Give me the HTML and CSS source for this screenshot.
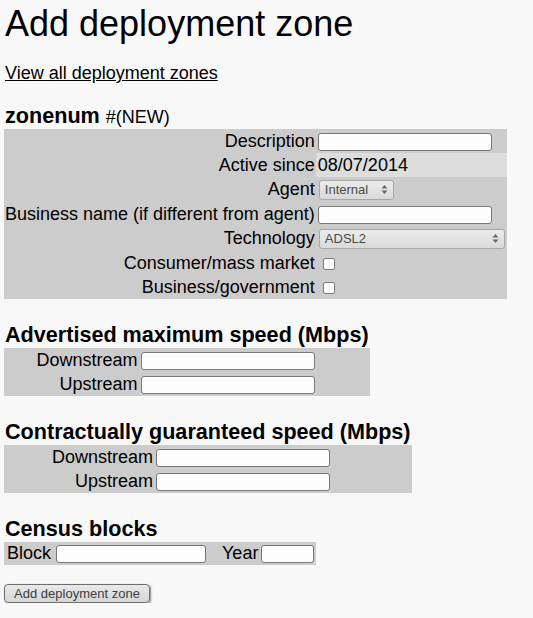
FILE: index.html
```html
<!DOCTYPE html>
<html lang="en">
<head>
<meta charset="utf-8">
<title>Add deployment zone</title>
<link rel="stylesheet" href="styles.css">
</head>
<body>
<h1 class="page-title">Add deployment zone</h1>
<p class="nav"><a class="nav-link" href="#">View all deployment zones</a></p>
<form class="zone-form">
  <table class="ftable ftable-main">
    <tr><th colspan="2" class="sect-head sect-head-main">zonenum <span class="sect-sub">#(NEW)</span></th></tr>
    <tr class="row"><td class="lbl">Description</td><td class="val"><input class="txt" type="text"></td></tr>
    <tr class="row"><td class="lbl">Active since</td><td class="val val-static">08/07/2014</td></tr>
    <tr class="row row-sel"><td class="lbl">Agent</td><td class="val"><div class="select select-agent"><span>Internal</span><svg class="arrows" width="7" height="11" viewBox="0 0 7 11"><polygon points="3.5,1 6.5,4.5 0.5,4.5"/><polygon points="0.5,6.5 6.5,6.5 3.5,10"/></svg></div></td></tr>
    <tr class="row"><td class="lbl">Business name (if different from agent)</td><td class="val"><input class="txt" type="text"></td></tr>
    <tr class="row row-sel"><td class="lbl">Technology</td><td class="val"><div class="select select-tech"><span>ADSL2</span><svg class="arrows" width="7" height="11" viewBox="0 0 7 11"><polygon points="3.5,1 6.5,4.5 0.5,4.5"/><polygon points="0.5,6.5 6.5,6.5 3.5,10"/></svg></div></td></tr>
    <tr class="row"><td class="lbl">Consumer/mass market</td><td class="val"><input class="chk" type="checkbox"></td></tr>
    <tr class="row"><td class="lbl">Business/government</td><td class="val"><input class="chk" type="checkbox"></td></tr>
  </table>

  <table class="ftable ftable-sect">
    <tr><th colspan="2" class="sect-head">Advertised maximum speed (Mbps)</th></tr>
    <tr class="row"><td class="lbl">Downstream</td><td class="val"><input class="txt" type="text"></td></tr>
    <tr class="row"><td class="lbl">Upstream</td><td class="val"><input class="txt" type="text"></td></tr>
  </table>

  <table class="ftable ftable-sect">
    <tr><th colspan="2" class="sect-head">Contractually guaranteed speed (Mbps)</th></tr>
    <tr class="row"><td class="lbl">Downstream</td><td class="val"><input class="txt" type="text"></td></tr>
    <tr class="row"><td class="lbl">Upstream</td><td class="val"><input class="txt" type="text"></td></tr>
  </table>

  <div class="census">
    <h3 class="sect-head census-head">Census blocks</h3>
    <div class="census-row">
      <span class="census-lbl">Block</span>
      <input class="txt txt-block" type="text">
      <span class="census-lbl census-year">Year</span>
      <input class="txt txt-year" type="text">
    </div>
  </div>

  <div class="actions"><button class="btn" type="button">Add deployment zone</button></div>
</form>
</body>
</html>
```

FILE: styles.css
```css
html, body {
  background: #f8f8f8;
}
body {
  margin: 0;
  padding: 3px 4px 0 4px;
  font-family: "Liberation Sans", Arial, sans-serif;
  font-size: 18px;
  color: #000;
}
.page-title {
  margin: 0;
  font-size: 36px;
  font-weight: normal;
  line-height: normal;
  padding-left: 1px;
}
.nav {
  margin: 18px 0 0 0;
  padding-left: 1px;
}
.nav-link {
  color: #000;
  text-decoration: underline;
}
.zone-form {
  margin: 0;
}
.ftable {
  border-collapse: separate;
  border-spacing: 0;
  margin-top: 24px;
}
.ftable-main {
  margin-top: 20px;
}
.sect-head {
  margin: 0;
  font-size: 21.6px;
  font-weight: bold;
  text-align: left;
  line-height: 24px;
  padding: 0 1px 1px 1px;
}
.sect-head-main {
  padding-bottom: 0;
}
.sect-sub {
  font-size: 18px;
  font-weight: normal;
}
.row td {
  background: #cccccc;
  height: 24px;
  padding: 0 1px;
  vertical-align: middle;
  white-space: nowrap;
}
.row-sel td {
  height: 25px;
}
.lbl {
  text-align: right;
}
.row .val {
  padding-left: 2px;
}
.row .val-static {
  background: #dddddd;
}
.txt {
  box-sizing: border-box;
  width: 174px;
  height: 18px;
  margin: 0;
  padding: 0 3px;
  border: 1px solid #777;
  border-radius: 3px;
  background: #fdfdfd;
  font-family: "Liberation Sans", Arial, sans-serif;
  font-size: 13px;
  vertical-align: middle;
}
.select {
  box-sizing: border-box;
  display: flex;
  align-items: center;
  justify-content: space-between;
  height: 20px;
  margin-left: 1px;
  padding: 0 5px 0 5px;
  border: 1px solid #a8a8a8;
  border-radius: 3px;
  background: linear-gradient(#ececec, #d9d9d9);
  color: #4a4a4a;
  font-size: 13px;
}
.select-agent {
  width: 75px;
}
.select-tech {
  width: 186px;
  margin-right: 1px;
}
.arrows {
  fill: #6a6a6a;
  display: block;
}
.chk {
  appearance: none;
  -webkit-appearance: none;
  box-sizing: border-box;
  width: 12px;
  height: 12px;
  margin: 0 0 0 5px;
  border: 1px solid #7d7d7d;
  border-radius: 2px;
  background: #fdfdfd;
  vertical-align: middle;
  display: inline-block;
}
.census {
  margin-top: 24px;
  display: inline-block;
  vertical-align: top;
}
.census-head {
  padding-bottom: 1px;
}
.census-row {
  display: flex;
  align-items: center;
  height: 23px;
  background: #cccccc;
  padding: 0 2px 0 3px;
}
.txt-block {
  width: 150px;
  margin-left: 5px;
}
.census-year {
  margin-left: 16px;
  margin-right: 3px;
}
.txt-year {
  width: 53px;
}
.actions {
  margin-top: 19px;
}
.btn {
  display: block;
  box-sizing: border-box;
  height: 19px;
  width: 146px;
  padding: 0;
  border: 1px solid #6d6d6d;
  border-radius: 4px;
  background: linear-gradient(#e9e9e9, #d6d6d6);
  box-shadow: 1px 1px 2px rgba(0, 0, 0, 0.45);
  color: #3c3c3c;
  font-family: "Liberation Sans", Arial, sans-serif;
  font-size: 13px;
  line-height: 17px;
}
```
